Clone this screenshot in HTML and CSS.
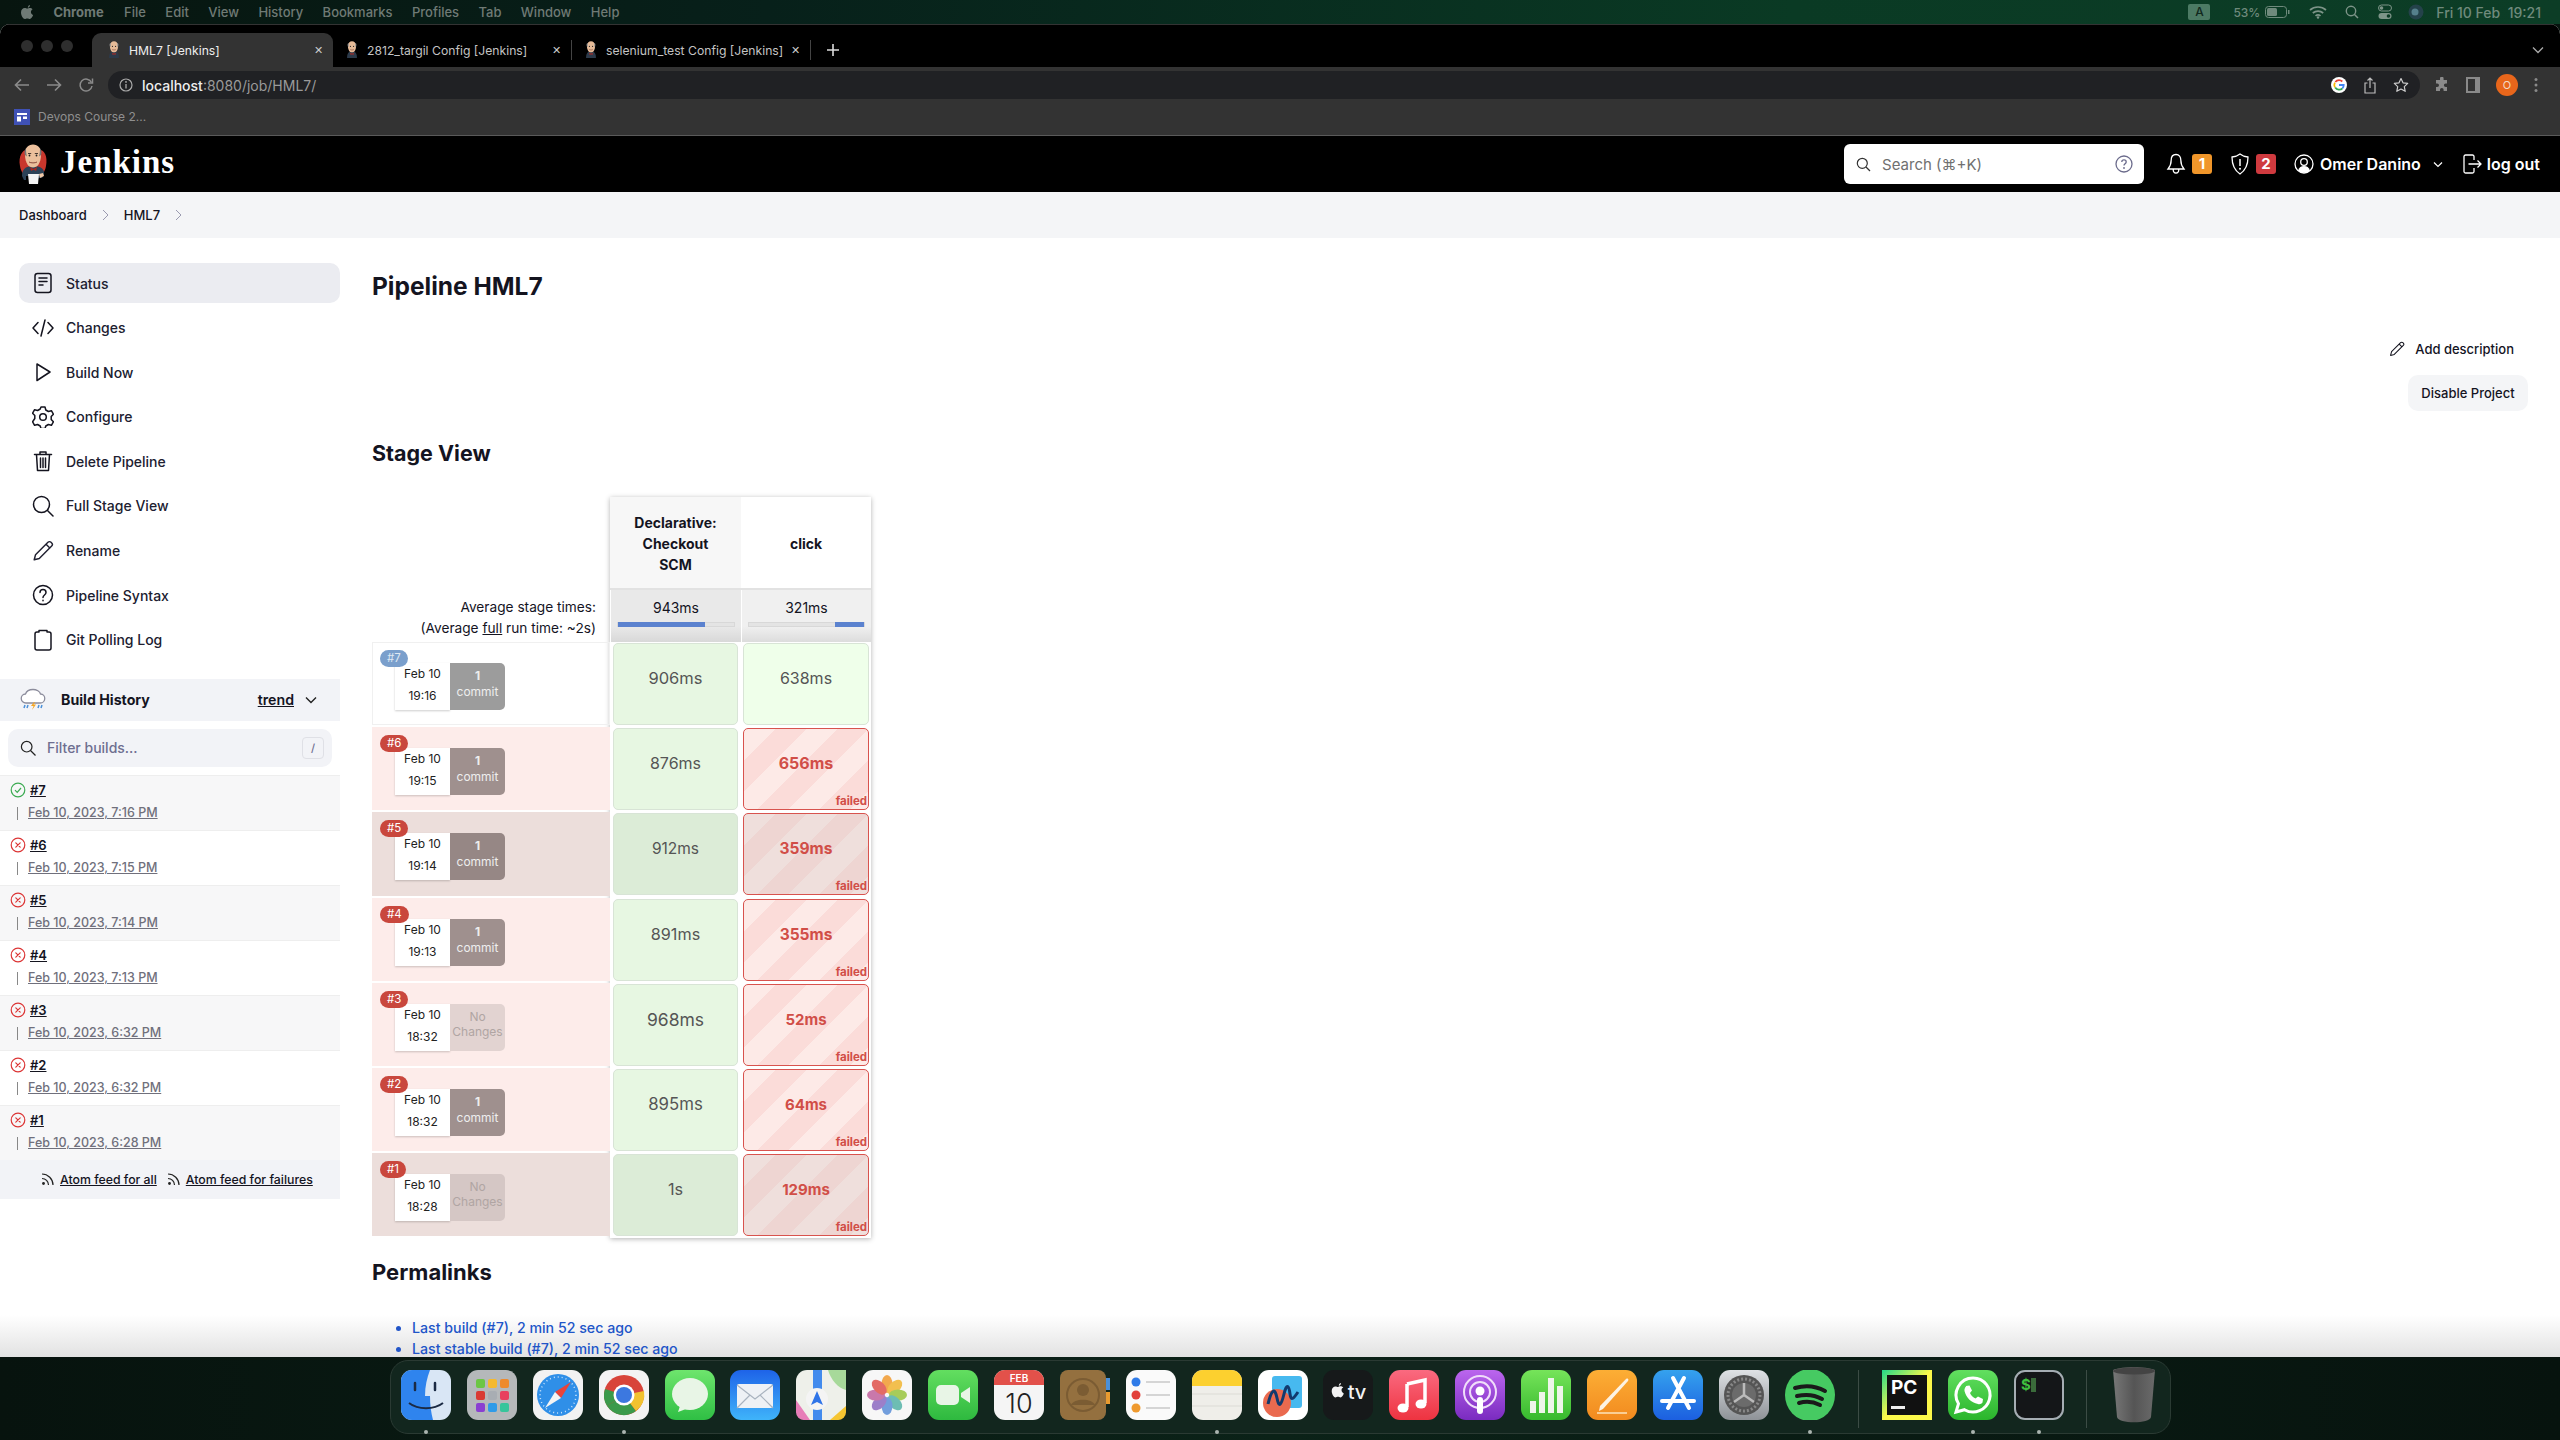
FILE: index.html
```html
<!doctype html>
<html lang="en">
<head>
    <meta charset="utf-8"/>
    <title>HML7 [Jenkins]</title>
    <link rel="stylesheet" href="styles.css">
</head>

<body>
<svg class="defs" width="0" height="0">
    <symbol id="butler" viewBox="0 0 30 40">
        <path d="M2 22C0 12 5 6 8 6h14c4 0 8 6 6 16-1 6-4 10-8 10H9c-3 0-6-4-7-10z" fill="#c8372d"/>
        <path d="M4 32c0-6 3-10 11-10s12 3 11 9l-2 3H17v-2H8v4H6z" fill="#2c4257"/>
        <path d="M10 30h11l-1 10h-9z" fill="#f4f4f4"/>
        <path d="M21 30l4-1 1 3-4 2z" fill="#f0c7a5"/>
        <path d="M12 23l3.500 2 3.500-2-.8 4-2.700-1.300L13 27z" fill="#a8261f"/>
        <path d="M7 10C7 4 10 .5 15 .5S23 4 23 10c0 5-1 8-2.500 10.500-1.400 2.300-3.500 3-5.500 3s-4.100-.7-5.500-3C8 18 7 15 7 10z" fill="#ecc09c"/>
        <path d="M7 11c-1-2-.5-5 1-6.500 0 3 .3 5 1 8zM23 11c1-2 .5-5-1-6.500 0 3-.3 5-1 8z" fill="#777"/>
        <path d="M10 9.500h3.200M16.800 9.500H20" stroke="#4a3a30" stroke-width="1"/>
        <circle cx="11.500" cy="11.500" r=".9" fill="#222"/>
        <circle cx="18.500" cy="11.500" r=".9" fill="#222"/>
        <path d="M11 18c2 1.200 6 1.200 8 0" stroke="#8a4a3a" stroke-width="1" fill="none"/>
    </symbol>
    <symbol id="butler-small" viewBox="0 0 30 40">
        <path d="M4 38c0-10 3-15 11-15s11 5 11 15z" fill="#2c3a4a"/>
        <path d="M11 26l4 2.500 4-2.500-.8 5-3.200-1.500L12 31z" fill="#b32a22"/>
        <path d="M6 11C6 4 10 .5 15 .5S24 4 24 11c0 5-1 8-2.500 10.500-1.400 2.300-4 3.500-6.500 3.500s-5.100-1.200-6.500-3.500C7 19 6 16 6 11z" fill="#e6bb98"/>
        <path d="M6 12c-1.500-3-1-6 1.500-8 0 3 .3 6 1 9zM24 12c1.500-3 1-6-1.500-8 0 3-.3 6-1 9z" fill="#9a9a9a"/>
        <circle cx="11.500" cy="12" r="1.200" fill="#222"/>
        <circle cx="18.500" cy="12" r="1.200" fill="#222"/>
        <path d="M11 19c2 1.200 6 1.200 8 0" stroke="#7a4030" stroke-width="1.200" fill="none"/>
    </symbol>
    <symbol id="failed" viewBox="0 0 16 16">
        <circle cx="8" cy="8" r="6.800" fill="none" stroke="#dc3535" stroke-width="1.200"/>
        <path d="M5.800 5.800l4.400 4.400M10.200 5.800l-4.400 4.400" stroke="#dc3535" stroke-width="1.200" stroke-linecap="round"/>
    </symbol>
    <symbol id="rss" viewBox="0 0 14 14">
        <circle cx="2.500" cy="11.500" r="1.400" fill="#222"/>
        <path d="M1 6.500c3.600 0 6.500 2.900 6.500 6.500M1 2c6 0 11 5 11 11" fill="none" stroke="#222" stroke-width="1.200"/>
    </symbol>
    <symbol id="pencil" viewBox="0 0 20 20">
        <path d="M2 18l1.200-4.600L14.500 2.100c.8-.8 2-.8 2.800 0l.6.600c.8.800.8 2 0 2.800L6.600 16.800zM12.800 3.800l3.400 3.400" fill="none" stroke="currentColor" stroke-width="1.300" stroke-linejoin="round"/>
    </symbol>
</svg>

<div class="menubar">
    <div class="menu-left">
        <svg class="apple" width="14" height="16" viewBox="0 0 14 16"><path d="M10 1c-1 .2-2.200 1.200-2.200 2.800 1.200 0 2.200-1.300 2.200-2.800zM7.300 4.600C6.500 4.600 5.800 4 4.700 4 2.800 4 1 5.600 1 8.500 1 11.500 3.200 15 4.800 15c.9 0 1.300-.6 2.500-.6s1.500.6 2.500.6c1.400 0 2.900-2.400 3.300-3.900-1.400-.6-2.200-1.800-2.200-3.100 0-1.200.7-2.200 1.700-2.800C11.900 4.300 10.800 4 10 4c-1.200 0-2 .6-2.700.6z" fill="#6f7a75"/></svg>
        <b>Chrome</b><span>File</span><span>Edit</span><span>View</span><span>History</span><span>Bookmarks</span><span>Profiles</span><span>Tab</span><span>Window</span><span>Help</span>
    </div>
    <div class="menu-right">
        <i class="input-a">A</i>
        <span class="pct">53%</span>
        <svg width="25" height="12" viewBox="0 0 25 12"><rect x=".5" y=".5" width="21" height="11" rx="3" fill="none" stroke="#6f8a7c"/><rect x="2" y="2" width="10" height="8" rx="1.500" fill="#6f8a7c"/><rect x="23" y="4" width="1.500" height="4" fill="#6f8a7c"/></svg>
        <svg class="mi-wifi" width="18" height="14" viewBox="0 0 18 14"><path d="M1 5c4.500-4 11.500-4 16 0M3.800 8c3-2.600 7.400-2.600 10.400 0M6.500 10.800c1.500-1.200 3.500-1.200 5 0" fill="none" stroke="#7d9488" stroke-width="1.700"/><circle cx="9" cy="12.500" r="1.200" fill="#7d9488"/></svg>
        <svg class="mi-search" width="14" height="14" viewBox="0 0 14 14"><circle cx="6" cy="6" r="4.700" fill="none" stroke="#7d9488" stroke-width="1.400"/><path d="M9.500 9.500l3.500 3.500" stroke="#7d9488" stroke-width="1.500"/></svg>
        <svg class="mi-ctrl" width="14" height="16" viewBox="0 0 14 16"><rect x=".5" y="1" width="13" height="6" rx="3" fill="none" stroke="#7d9488"/><rect x=".5" y="9" width="13" height="6" rx="3" fill="#7d9488"/><circle cx="3.500" cy="4" r="1.800" fill="#7d9488"/><circle cx="10.500" cy="12" r="1.800" fill="#0b3a24"/></svg>
        <svg class="mi-siri" width="16" height="16" viewBox="0 0 16 16"><circle cx="8" cy="8" r="7.500" fill="#24424a"/><circle cx="7" cy="8" r="3.500" fill="#55808c"/></svg>
        <span class="clock">Fri 10 Feb&nbsp; 19:21</span>
    </div>
</div>

<div class="window">
    <div class="tabstrip">
        <div class="lights"><i></i><i></i><i></i></div>
        <div class="tab tab-active">
            <svg class="favicon" width="14" height="18"><use href="#butler-small"/></svg>
            <span class="tab-title">HML7 [Jenkins]</span>
            <span class="tab-x">✕</span>
        </div>
        <div class="tab tab-second">
            <svg class="favicon" width="14" height="18"><use href="#butler-small"/></svg>
            <span class="tab-title">2812_targil Config [Jenkins]</span>
            <span class="tab-x">✕</span>
        </div>
        <div class="tab tab-third">
            <svg class="favicon" width="14" height="18"><use href="#butler-small"/></svg>
            <span class="tab-title">selenium_test Config [Jenkins]</span>
            <span class="tab-x">✕</span>
        </div>
        <svg class="tab-plus" width="14" height="14" viewBox="0 0 14 14"><path d="M7 1v12M1 7h12" stroke="#ddd" stroke-width="1.600"/></svg>
        <svg class="tab-more" width="12" height="8" viewBox="0 0 12 8"><path d="M1 1.500l5 5 5-5" fill="none" stroke="#aaa" stroke-width="1.300"/></svg>
    </div>

    <div class="toolbar">
        <div class="nav-icons">
            <svg width="16" height="14" viewBox="0 0 16 14"><path d="M15 7H2M7 1.500L1.500 7 7 12.500" fill="none" stroke="#8b8b8b" stroke-width="1.600"/></svg>
            <svg width="16" height="14" viewBox="0 0 16 14"><path d="M1 7h13M9 1.500L14.500 7 9 12.500" fill="none" stroke="#8b8b8b" stroke-width="1.600"/></svg>
            <svg width="16" height="16" viewBox="0 0 16 16"><path d="M13.500 5.500A6 6 0 1 0 14 9" fill="none" stroke="#8b8b8b" stroke-width="1.500"/><path d="M14.500 1.500v4.500H10" fill="none" stroke="#8b8b8b" stroke-width="1.500"/></svg>
        </div>
        <div class="omnibox">
            <svg width="14" height="14" viewBox="0 0 14 14"><circle cx="7" cy="7" r="6" fill="none" stroke="#aaa" stroke-width="1.200"/><path d="M7 6v4.500" stroke="#aaa" stroke-width="1.300"/><circle cx="7" cy="3.900" r=".9" fill="#aaa"/></svg>
            <span class="url"><b>localhost</b>:8080/job/HML7/</span>
            <div class="omni-right">
                <svg width="16" height="16" viewBox="0 0 16 16"><circle cx="8" cy="8" r="8" fill="#fff"/><path d="M8 3.200a4.800 4.800 0 0 1 3.300 1.300" fill="none" stroke="#ea4335" stroke-width="1.800"/><path d="M4.300 5a4.800 4.800 0 0 1 3.700-1.800" fill="none" stroke="#ea4335" stroke-width="1.800"/><path d="M3.900 10.400a4.800 4.800 0 0 1 0-4.800" fill="none" stroke="#fbbc05" stroke-width="1.800"/><path d="M11.500 11.300a4.800 4.800 0 0 1-7.300-.8" fill="none" stroke="#34a853" stroke-width="1.800"/><path d="M8 8h4.700c0 1.300-.5 2.500-1.300 3.300" fill="none" stroke="#4285f4" stroke-width="1.800"/></svg>
                <svg width="12" height="17" viewBox="0 0 12 17"><path d="M3.500 6H1v10h10V6H8.500M6 11V1M3.500 3.500L6 1l2.500 2.500" fill="none" stroke="#bbb" stroke-width="1.200"/></svg>
                <svg width="16" height="16" viewBox="0 0 16 16"><path d="M8 1.500l2 4.300 4.700.6-3.400 3.200.9 4.700L8 12l-4.200 2.300.9-4.700L1.300 6.400 6 5.800z" fill="none" stroke="#ccc" stroke-width="1.200" stroke-linejoin="round"/></svg>
            </div>
        </div>
        <div class="tool-right">
            <svg width="16" height="16" viewBox="0 0 16 16"><path d="M6 1.500a1.800 1.800 0 0 1 3.600 0V3h3.400v3.500h-1.300a1.800 1.800 0 0 0 0 3.600H13V14H9.600v-1.300a1.800 1.800 0 0 0-3.600 0V14H2v-3.900h1.200a1.800 1.800 0 0 0 0-3.600H2V3h4z" fill="#8a8a8a"/></svg>
            <svg width="14" height="16" viewBox="0 0 14 16"><rect x="1" y="1" width="12" height="14" fill="none" stroke="#8a8a8a" stroke-width="2"/><rect x="9" y="1" width="4" height="14" fill="#8a8a8a"/></svg>
            <span class="avatar">O</span>
            <svg width="4" height="16" viewBox="0 0 4 16"><circle cx="2" cy="2.500" r="1.500" fill="#8a8a8a"/><circle cx="2" cy="8" r="1.500" fill="#8a8a8a"/><circle cx="2" cy="13.500" r="1.500" fill="#8a8a8a"/></svg>
        </div>
    </div>

    <div class="bookmarks">
        <svg width="16" height="16" viewBox="0 0 16 16"><rect width="16" height="16" fill="#3f51b5"/><rect x="3" y="4" width="10" height="2" fill="#fff"/><rect x="3" y="7.500" width="4" height="5" fill="#fff"/><rect x="9" y="7.500" width="4" height="2.500" fill="#fff"/></svg>
        <span>Devops Course 2...</span>
    </div>

    <header class="jk-header">
        <div class="jk-logo">
            <svg width="30" height="40"><use href="#butler"/></svg>
            <span>Jenkins</span>
        </div>
        <div class="jk-tools">
            <div class="searchbox">
                <svg width="15" height="15" viewBox="0 0 15 15"><circle cx="6.300" cy="6.300" r="5" fill="none" stroke="#333" stroke-width="1.200"/><path d="M10 10l4 4" stroke="#333" stroke-width="1.200"/></svg>
                <span class="search-hint">Search (⌘+K)</span>
                <svg class="search-help" width="18" height="18" viewBox="0 0 18 18"><circle cx="9" cy="9" r="8" fill="none" stroke="#6c6c8c" stroke-width="1.300"/><path d="M6.800 7c0-1.300 1-2.100 2.200-2.100S11.200 5.700 11.200 7c0 1.800-2.200 1.800-2.200 3.600" fill="none" stroke="#6c6c8c" stroke-width="1.300"/><circle cx="9" cy="13" r=".9" fill="#6c6c8c"/></svg>
            </div>
            <div class="jk-bell">
                <svg width="20" height="22" viewBox="0 0 20 22"><path d="M10 1.500c-3.200 0-4.800 2.500-4.800 5.500 0 4.500-1.200 6.500-3.200 9h16c-2-2.500-3.200-4.500-3.200-9 0-3-1.600-5.500-4.800-5.500zM7.200 16.500c0 2.200 1.200 3.500 2.800 3.500s2.800-1.300 2.800-3.500" fill="none" stroke="#fff" stroke-width="1.300"/></svg>
                <span class="count count-orange">1</span>
            </div>
            <div class="jk-shield">
                <svg width="20" height="22" viewBox="0 0 20 22"><path d="M10 1c2.500 2 5 2.700 8 3 0 8-2 13-8 17C4 17 2 12 2 4c3-.3 5.500-1 8-3z" fill="none" stroke="#fff" stroke-width="1.300"/><path d="M10 6v7" stroke="#fff" stroke-width="1.500"/><circle cx="10" cy="15.800" r="1" fill="#fff"/></svg>
                <span class="count count-red">2</span>
            </div>
            <div class="jk-user">
                <svg width="20" height="20" viewBox="0 0 20 20"><circle cx="10" cy="10" r="9" fill="none" stroke="#fff" stroke-width="1.300"/><circle cx="10" cy="8" r="3.300" fill="none" stroke="#fff" stroke-width="1.300"/><path d="M4 16.500c1-3.300 3.200-4.500 6-4.500s5 1.200 6 4.500c-3 3-9 3-12 0z" fill="#fff"/></svg>
                <span>Omer Danino</span>
                <svg class="user-caret" width="10" height="7" viewBox="0 0 10 7"><path d="M1 1.500l4 4 4-4" fill="none" stroke="#fff" stroke-width="1.200"/></svg>
            </div>
            <div class="jk-logout">
                <svg width="20" height="22" viewBox="0 0 20 22"><path d="M12 7V3.500C12 2.700 11.300 2 10.500 2H3.500C2.700 2 2 2.700 2 3.500v15c0 .8.700 1.500 1.500 1.500h7c.8 0 1.500-.7 1.500-1.500V15M6.500 11H19M15.500 7.500L19 11l-3.500 3.500" fill="none" stroke="#fff" stroke-width="1.300"/></svg>
                <span>log out</span>
            </div>
        </div>
    </header>

    <div class="crumbs">
        <span>Dashboard</span>
        <svg width="7" height="12" viewBox="0 0 7 12"><path d="M1 1l5 5-5 5" fill="none" stroke="#9a9ab0" stroke-width="1"/></svg>
        <span>HML7</span>
        <svg width="7" height="12" viewBox="0 0 7 12"><path d="M1 1l5 5-5 5" fill="none" stroke="#9a9ab0" stroke-width="1"/></svg>
    </div>

    <div class="page">
        <div class="fade"></div>
        <aside class="side">
            <nav class="side-nav">
                <a class="side-item current">
                    <svg viewBox="0 0 20 22"><rect x="2" y="1.500" width="16" height="19" rx="2.500"/><path d="M6 6h8M6 9.500h8M6 13h4"/></svg>
                    Status
                </a>
                <a class="side-item">
                    <svg viewBox="0 0 22 20"><path d="M6 4.500L1 10l5 5.500M16 4.500l5 5.500-5 5.500M13 2L9 18"/></svg>
                    Changes
                </a>
                <a class="side-item">
                    <svg viewBox="0 0 20 22"><path d="M4 3l13 8-13 8.500z"/></svg>
                    Build Now
                </a>
                <a class="side-item">
                    <svg viewBox="0 0 22 22"><path d="M9 1.500h4l.8 3 2.600 1.500 3-.8 2 3.500-2.200 2.300v3l2.200 2.300-2 3.500-3-.8-2.600 1.500-.8 2.500H9l-.8-2.500-2.600-1.500-3 .8-2-3.500L2.800 13v-3L.6 7.700l2-3.500 3 .8 2.600-1.500z" transform="translate(0 -.5)"/><circle cx="11" cy="11" r="3.300"/></svg>
                    Configure
                </a>
                <a class="side-item">
                    <svg viewBox="0 0 20 22"><path d="M1.500 4.500h17M7 4.500V2h6v2.500M3.500 4.500L4.500 20.500h11l1-16M7.500 8v9.500M10 8v9.500M12.500 8v9.500"/></svg>
                    Delete Pipeline
                </a>
                <a class="side-item">
                    <svg viewBox="0 0 22 22"><circle cx="9.500" cy="9.500" r="8"/><path d="M15.500 15.500L21 21"/></svg>
                    Full Stage View
                </a>
                <a class="side-item">
                    <svg viewBox="0 0 20 20"><use href="#pencil"/></svg>
                    Rename
                </a>
                <a class="side-item">
                    <svg viewBox="0 0 22 22"><circle cx="11" cy="11" r="9.500"/><path d="M8 8.500c0-1.800 1.300-3 3-3s3 1.200 3 3c0 2.500-3 2.500-3 5"/><path class="dot" d="M11 16.200v.6"/></svg>
                    Pipeline Syntax
                </a>
                <a class="side-item">
                    <svg viewBox="0 0 20 22"><path d="M6 3H4a2 2 0 0 0-2 2v14a2 2 0 0 0 2 2h12a2 2 0 0 0 2-2V5a2 2 0 0 0-2-2h-2M6 3V1.500h8V3"/></svg>
                    Git Polling Log
                </a>
            </nav>

            <section class="history">
                <div class="history-head">
                    <svg width="26" height="24" viewBox="0 0 26 24"><path d="M6 15a4.500 4.500 0 0 1-.5-9C6.500 3 9.500 1.500 13 1.500S20 3.500 20.500 6a4.500 4.500 0 0 1-.5 9z" fill="#fff" stroke="#8c8c9c" stroke-width="1.300"/><path d="M14 14l-3 4h2.500l-1.500 4 4-5.500h-2.500l1.500-2.500z" fill="#f5a623"/><path d="M5 17l-1 3M8 17l-1 3M19 17l-1 3M22 17l-1 3" stroke="#4a90d9" stroke-width="1.500"/></svg>
                    <b>Build History</b>
                    <a class="trend">trend</a>
                    <svg width="12" height="8" viewBox="0 0 12 8"><path d="M1 1.500l5 5 5-5" fill="none" stroke="#222" stroke-width="1.400"/></svg>
                </div>
                <div class="filter">
                    <svg width="16" height="16" viewBox="0 0 16 16"><circle cx="6.700" cy="6.700" r="5.300" fill="none" stroke="#222" stroke-width="1.200"/><path d="M10.500 10.500l5 5" stroke="#222" stroke-width="1.200"/></svg>
                    <span>Filter builds...</span>
                    <kbd>/</kbd>
                </div>
                <div class="build odd">
                    <div class="build-top">
                        <svg width="16" height="16" viewBox="0 0 16 16"><circle cx="8" cy="8" r="6.800" fill="none" stroke="#3cab52" stroke-width="1.200"/><path d="M5 8.200l2.200 2.200L11 6" fill="none" stroke="#3cab52" stroke-width="1.200"/></svg>
                        <a>#7</a>
                    </div>
                    <div class="build-date"><i></i><a>Feb 10, 2023, 7:16 PM</a></div>
                </div>
                <div class="build">
                    <div class="build-top"><svg width="16" height="16"><use href="#failed"/></svg><a>#6</a></div>
                    <div class="build-date"><i></i><a>Feb 10, 2023, 7:15 PM</a></div>
                </div>
                <div class="build odd">
                    <div class="build-top"><svg width="16" height="16"><use href="#failed"/></svg><a>#5</a></div>
                    <div class="build-date"><i></i><a>Feb 10, 2023, 7:14 PM</a></div>
                </div>
                <div class="build">
                    <div class="build-top"><svg width="16" height="16"><use href="#failed"/></svg><a>#4</a></div>
                    <div class="build-date"><i></i><a>Feb 10, 2023, 7:13 PM</a></div>
                </div>
                <div class="build odd">
                    <div class="build-top"><svg width="16" height="16"><use href="#failed"/></svg><a>#3</a></div>
                    <div class="build-date"><i></i><a>Feb 10, 2023, 6:32 PM</a></div>
                </div>
                <div class="build">
                    <div class="build-top"><svg width="16" height="16"><use href="#failed"/></svg><a>#2</a></div>
                    <div class="build-date"><i></i><a>Feb 10, 2023, 6:32 PM</a></div>
                </div>
                <div class="build odd">
                    <div class="build-top"><svg width="16" height="16"><use href="#failed"/></svg><a>#1</a></div>
                    <div class="build-date"><i></i><a>Feb 10, 2023, 6:28 PM</a></div>
                </div>
                <div class="history-foot">
                    <svg width="14" height="14"><use href="#rss"/></svg><a>Atom feed for all</a>
                    <svg class="rss-two" width="14" height="14"><use href="#rss"/></svg><a>Atom feed for failures</a>
                </div>
            </section>
        </aside>

        <main class="main">
            <div class="title-row">
                <h1>Pipeline HML7</h1>
            </div>
            <div class="actions">
                <a class="add-desc"><svg width="16" height="16"><use href="#pencil"/></svg>Add description</a>
                <button class="disable-btn">Disable Project</button>
            </div>
            <h2 class="stage-title">Stage View</h2>

            <div class="stage">
                <div class="stage-left">
                    <div class="avg-label">
                        <div>Average stage times:</div>
                        <div>(Average <u>full</u> run time: ~2s)</div>
                    </div>
                    <div class="run">
                        <span class="run-no no-ok">#7</span>
                        <div class="run-date"><div>Feb 10</div><div>19:16</div></div>
                        <div class="run-commit">1<br><small>commit</small></div>
                    </div>
                    <div class="run bad">
                        <span class="run-no">#6</span>
                        <div class="run-date"><div>Feb 10</div><div>19:15</div></div>
                        <div class="run-commit">1<br><small>commit</small></div>
                    </div>
                    <div class="run bad dim">
                        <span class="run-no">#5</span>
                        <div class="run-date"><div>Feb 10</div><div>19:14</div></div>
                        <div class="run-commit">1<br><small>commit</small></div>
                    </div>
                    <div class="run bad">
                        <span class="run-no">#4</span>
                        <div class="run-date"><div>Feb 10</div><div>19:13</div></div>
                        <div class="run-commit">1<br><small>commit</small></div>
                    </div>
                    <div class="run bad">
                        <span class="run-no">#3</span>
                        <div class="run-date"><div>Feb 10</div><div>18:32</div></div>
                        <div class="run-commit none"><small>No<br>Changes</small></div>
                    </div>
                    <div class="run bad">
                        <span class="run-no">#2</span>
                        <div class="run-date"><div>Feb 10</div><div>18:32</div></div>
                        <div class="run-commit">1<br><small>commit</small></div>
                    </div>
                    <div class="run bad dim">
                        <span class="run-no">#1</span>
                        <div class="run-date"><div>Feb 10</div><div>18:28</div></div>
                        <div class="run-commit none"><small>No<br>Changes</small></div>
                    </div>
                </div>

                <div class="stage-cols">
                    <div class="col-head alt">Declarative:<br>Checkout<br>SCM</div>
                    <div class="col-head">click</div>
                    <div class="col-avg">943ms<div class="bar"><div class="bar-fill bar-a"></div></div></div>
                    <div class="col-avg">321ms<div class="bar"><div class="bar-fill bar-b"></div></div></div>

                    <div class="cell-wrap"><div class="cell ok t52">906ms</div></div>
                    <div class="cell-wrap"><div class="cell ok pale t50">638ms</div></div>
                    <div class="cell-wrap"><div class="cell ok t50">876ms</div></div>
                    <div class="cell-wrap"><div class="cell fail t54">656ms<span class="failed">failed</span></div></div>
                    <div class="cell-wrap"><div class="cell ok dim t49">912ms</div></div>
                    <div class="cell-wrap"><div class="cell fail dim t52">359ms<span class="failed">failed</span></div></div>
                    <div class="cell-wrap"><div class="cell ok t51">891ms</div></div>
                    <div class="cell-wrap"><div class="cell fail t52">355ms<span class="failed">failed</span></div></div>
                    <div class="cell-wrap"><div class="cell ok t55">968ms</div></div>
                    <div class="cell-wrap"><div class="cell fail t50">52ms<span class="failed">failed</span></div></div>
                    <div class="cell-wrap"><div class="cell ok t53">895ms</div></div>
                    <div class="cell-wrap"><div class="cell fail t50">64ms<span class="failed">failed</span></div></div>
                    <div class="cell-wrap"><div class="cell ok dim t51">1s</div></div>
                    <div class="cell-wrap"><div class="cell fail dim t50">129ms<span class="failed">failed</span></div></div>
                </div>
            </div>

            <h2 class="perma-title">Permalinks</h2>
            <ul class="perma">
                <li><a>Last build (#7), 2 min 52 sec ago</a></li>
                <li><a>Last stable build (#7), 2 min 52 sec ago</a></li>
            </ul>
        </main>
    </div>
</div>

<div class="dock-band">
    <div class="dock">
        <div class="dock-item run-dot"><svg viewBox="0 0 50 50"><rect width="50" height="50" rx="11" fill="#d9e6f5"/><path d="M11 0h18c-3 8-5 16-5 26h5c0 9 1 16 3 24H11A11 11 0 0 1 0 39V11A11 11 0 0 1 11 0z" fill="#2f84ee"/><path d="M14 13v7M34 13v7" stroke="#1b2a44" stroke-width="2.500" stroke-linecap="round"/><path d="M8 33c9 7 25 7 34 0" fill="none" stroke="#1b2a44" stroke-width="2"/></svg></div>
        <div class="dock-item"><svg viewBox="0 0 50 50"><rect width="50" height="50" rx="11" fill="#b5b8ba"/><rect x="9" y="9" width="9" height="9" rx="2" fill="#6cc644"/><rect x="21" y="9" width="9" height="9" rx="2" fill="#f5b92e"/><rect x="33" y="9" width="9" height="9" rx="2" fill="#ee8a2c"/><rect x="9" y="21" width="9" height="9" rx="2" fill="#d93a32"/><rect x="21" y="21" width="9" height="9" rx="2" fill="#a8adb3"/><rect x="33" y="21" width="9" height="9" rx="2" fill="#e8405e"/><rect x="9" y="33" width="9" height="9" rx="2" fill="#8a3fd1"/><rect x="21" y="33" width="9" height="9" rx="2" fill="#2f9be8"/><rect x="33" y="33" width="9" height="9" rx="2" fill="#37c59b"/></svg></div>
        <div class="dock-item"><svg viewBox="0 0 50 50"><rect width="50" height="50" rx="11" fill="#f2f2f2"/><circle cx="25" cy="25" r="21" fill="#2f8fe8"/><circle cx="25" cy="25" r="18" fill="none" stroke="#cfe6fb" stroke-width="1.500" stroke-dasharray="1 3"/><path d="M38 12L22 22l6 6z" fill="#e8433a"/><path d="M12 38l10-16 6 6z" fill="#f4f4f4"/></svg></div>
        <div class="dock-item run-dot"><svg viewBox="0 0 50 50"><rect width="50" height="50" rx="11" fill="#f3f3f3"/><circle cx="25" cy="25" r="20" fill="#d8443a"/><path d="M25 25L8 36a20 20 0 0 1-2-17z" fill="#3b9a4b"/><path d="M8 36a20 20 0 0 0 29 5L25 25z" fill="#3b9a4b"/><path d="M25 25l20-4a20 20 0 0 1-8 20z" fill="#f2c22f"/><circle cx="25" cy="25" r="10.500" fill="#fff"/><circle cx="25" cy="25" r="8" fill="#3c78e0"/></svg></div>
        <div class="dock-item"><svg viewBox="0 0 50 50"><defs><linearGradient id="gMsg" x1="0" y1="0" x2="0" y2="1"><stop offset="0" stop-color="#6ee56d"/><stop offset="1" stop-color="#2fbf44"/></linearGradient></defs><rect width="50" height="50" rx="11" fill="url(#gMsg)"/><ellipse cx="25" cy="24" rx="18" ry="16" fill="#e8f5e6"/><path d="M15 36l-2 6 8-3z" fill="#e8f5e6"/></svg></div>
        <div class="dock-item"><svg viewBox="0 0 50 50"><defs><linearGradient id="gMail" x1="0" y1="0" x2="0" y2="1"><stop offset="0" stop-color="#1e63e8"/><stop offset="1" stop-color="#3fb4fa"/></linearGradient></defs><rect width="50" height="50" rx="11" fill="url(#gMail)"/><rect x="7" y="14" width="36" height="24" rx="2" fill="#eef1f5"/><path d="M7 15l18 14 18-14M7 38l13-13M43 38L30 25" fill="none" stroke="#a9b3bf" stroke-width="1.200"/></svg></div>
        <div class="dock-item"><svg viewBox="0 0 50 50"><rect width="50" height="50" rx="11" fill="#eef0ea"/><path d="M32 0h18v20c-8-2-15-10-18-20z" fill="#a7d99a"/><path d="M0 30l14 20H8a8 8 0 0 1-8-8z" fill="#e77db8"/><path d="M34 50l16-14v6a8 8 0 0 1-8 8z" fill="#f5c531"/><path d="M17 0h9v50h-9z" fill="#2f80ed" opacity=".9"/><circle cx="21" cy="29" r="11" fill="#f4f4f4"/><path d="M21 21l6 14-6-3-6 3z" fill="#2f74e8"/></svg></div>
        <div class="dock-item"><svg viewBox="0 0 50 50"><rect width="50" height="50" rx="11" fill="#f7f7f7"/><g opacity=".85"><ellipse cx="25" cy="14" rx="5.500" ry="9" fill="#f29b30"/><ellipse cx="25" cy="14" rx="5.500" ry="9" fill="#f2b632" transform="rotate(45 25 25)"/><ellipse cx="25" cy="14" rx="5.500" ry="9" fill="#9ac53f" transform="rotate(90 25 25)"/><ellipse cx="25" cy="14" rx="5.500" ry="9" fill="#55b3a8" transform="rotate(135 25 25)"/><ellipse cx="25" cy="14" rx="5.500" ry="9" fill="#5b8fd8" transform="rotate(180 25 25)"/><ellipse cx="25" cy="14" rx="5.500" ry="9" fill="#8d6bc1" transform="rotate(225 25 25)"/><ellipse cx="25" cy="14" rx="5.500" ry="9" fill="#c2629e" transform="rotate(270 25 25)"/><ellipse cx="25" cy="14" rx="5.500" ry="9" fill="#e0534c" transform="rotate(315 25 25)"/></g></svg></div>
        <div class="dock-item"><svg viewBox="0 0 50 50"><defs><linearGradient id="gFace" x1="0" y1="0" x2="0" y2="1"><stop offset="0" stop-color="#63de60"/><stop offset="1" stop-color="#2eb93f"/></linearGradient></defs><rect width="50" height="50" rx="11" fill="url(#gFace)"/><rect x="8" y="15" width="23" height="20" rx="5" fill="#e8f5e6"/><path d="M33 23l9-6v16l-9-6z" fill="#e8f5e6"/></svg></div>
        <div class="dock-item"><svg viewBox="0 0 50 50"><rect width="50" height="50" rx="11" fill="#f5f5f5"/><path d="M0 15V11A11 11 0 0 1 11 0h28a11 11 0 0 1 11 11v4z" fill="#e2514a"/><text x="25" y="11.500" class="dock-feb">FEB</text><text x="25" y="43" class="dock-ten">10</text></svg></div>
        <div class="dock-item"><svg viewBox="0 0 50 50"><rect width="46" height="50" rx="8" fill="#94703f"/><rect x="46" y="8" width="4" height="12" fill="#4a90d9"/><rect x="46" y="22" width="4" height="12" fill="#e89b30"/><circle cx="23" cy="25" r="16" fill="none" stroke="#7b5c33" stroke-width="2"/><circle cx="23" cy="20" r="6" fill="#7b5c33"/><path d="M11 35c3-7 21-7 24 0" fill="#7b5c33"/></svg></div>
        <div class="dock-item"><svg viewBox="0 0 50 50"><rect width="50" height="50" rx="11" fill="#fafafa"/><circle cx="10" cy="12" r="4.500" fill="#2f7be8"/><circle cx="10" cy="25" r="4.500" fill="#e2403a"/><circle cx="10" cy="38" r="4.500" fill="#ef9a2f"/><path d="M20 12h24M20 25h24M20 38h24" stroke="#d5d5d5" stroke-width="2"/></svg></div>
        <div class="dock-item run-dot"><svg viewBox="0 0 50 50"><rect width="50" height="50" rx="11" fill="#efeee9"/><path d="M0 16V11A11 11 0 0 1 11 0h28a11 11 0 0 1 11 11v5z" fill="#fcd02f"/><path d="M0 24h50M0 36h50" stroke="#dcdbd5" stroke-width="1"/></svg></div>
        <div class="dock-item"><svg viewBox="0 0 50 50"><rect width="50" height="50" rx="11" fill="#fff"/><rect x="14" y="6" width="30" height="32" rx="3" fill="#47b9ef"/><circle cx="19" cy="33" r="14" fill="#ea6a4f"/><path d="M10 34c4-16 7-16 9-6s4 8 7-4 5-8 6 0 4 4 8-2" fill="none" stroke="#123a6e" stroke-width="3"/></svg></div>
        <div class="dock-item"><svg viewBox="0 0 50 50"><rect width="50" height="50" rx="11" fill="#16191a"/><path d="M18 13c-1 .2-2.200 1.200-2.200 2.800 1.200 0 2.200-1.300 2.200-2.800zM15 17c-.8 0-1.500-.6-2.600-.6-1.900 0-3.700 1.600-3.700 4.500 0 3 2.200 6.500 3.800 6.500.9 0 1.300-.6 2.500-.6s1.500.6 2.500.6c1.400 0 2.900-2.400 3.300-3.900-2.800-1.200-3-5.200-.5-5.900-.8-1-1.900-1.300-2.700-1.300-1.200 0-2 .7-2.600.7z" fill="#f2f2f2"/><text x="34" y="29" class="dock-tv">tv</text></svg></div>
        <div class="dock-item"><svg viewBox="0 0 50 50"><defs><linearGradient id="gMusic" x1="0" y1="0" x2="0" y2="1"><stop offset="0" stop-color="#fa6a80"/><stop offset="1" stop-color="#ee3340"/></linearGradient></defs><rect width="50" height="50" rx="11" fill="url(#gMusic)"/><path d="M18 14l18-4v23" fill="none" stroke="#fff" stroke-width="3.500"/><path d="M18 14v23" stroke="#fff" stroke-width="3.500"/><ellipse cx="14" cy="38" rx="5.500" ry="4.500" fill="#fff"/><ellipse cx="32" cy="34" rx="5.500" ry="4.500" fill="#fff"/></svg></div>
        <div class="dock-item"><svg viewBox="0 0 50 50"><defs><linearGradient id="gPod" x1="0" y1="0" x2="0" y2="1"><stop offset="0" stop-color="#bb66ee"/><stop offset="1" stop-color="#7a2bc0"/></linearGradient></defs><rect width="50" height="50" rx="11" fill="url(#gPod)"/><circle cx="25" cy="22" r="16" fill="none" stroke="#f0ddfa" stroke-width="2"/><circle cx="25" cy="22" r="10" fill="none" stroke="#f0ddfa" stroke-width="2"/><circle cx="25" cy="21" r="4.500" fill="#fff"/><rect x="22" y="27" width="6" height="17" rx="3" fill="#fff"/></svg></div>
        <div class="dock-item"><svg viewBox="0 0 50 50"><defs><linearGradient id="gNum" x1="0" y1="0" x2="0" y2="1"><stop offset="0" stop-color="#76e45a"/><stop offset="1" stop-color="#37b92e"/></linearGradient></defs><rect width="50" height="50" rx="11" fill="url(#gNum)"/><rect x="9" y="31" width="6" height="12" fill="#eef5ea"/><rect x="18" y="22" width="6" height="21" fill="#eef5ea"/><rect x="27" y="8" width="6" height="35" fill="#eef5ea"/><rect x="36" y="16" width="6" height="27" fill="#eef5ea"/></svg></div>
        <div class="dock-item"><svg viewBox="0 0 50 50"><defs><linearGradient id="gPages" x1="0" y1="0" x2="0" y2="1"><stop offset="0" stop-color="#fcae35"/><stop offset="1" stop-color="#f28a1f"/></linearGradient></defs><rect width="50" height="50" rx="11" fill="url(#gPages)"/><path d="M39 9c2-1 3 0 2 2L16 39l-4 2 1-5z" fill="#fdf3e3"/><path d="M10 43h30" stroke="#fde3bd" stroke-width="1.500"/></svg></div>
        <div class="dock-item"><svg viewBox="0 0 50 50"><defs><linearGradient id="gStore" x1="0" y1="0" x2="0" y2="1"><stop offset="0" stop-color="#35a2ee"/><stop offset="1" stop-color="#1c5fe0"/></linearGradient></defs><rect width="50" height="50" rx="11" fill="url(#gStore)"/><path d="M31 8L15 38M20 8l16 30M9 31h32" stroke="#fff" stroke-width="4" stroke-linecap="round"/></svg></div>
        <div class="dock-item"><svg viewBox="0 0 50 50"><defs><linearGradient id="gSet" x1="0" y1="0" x2="0" y2="1"><stop offset="0" stop-color="#dfe2e5"/><stop offset="1" stop-color="#8e9297"/></linearGradient></defs><rect width="50" height="50" rx="11" fill="url(#gSet)"/><circle cx="25" cy="25" r="20" fill="#555"/><circle cx="25" cy="25" r="16" fill="none" stroke="#888" stroke-width="3" stroke-dasharray="2 2"/><circle cx="25" cy="25" r="12" fill="#6b6b6b"/><path d="M25 25V13M25 25l10 7M25 25l-10 7" stroke="#bbb" stroke-width="2.500"/></svg></div>
        <div class="dock-item run-dot"><svg viewBox="0 0 50 50"><ellipse cx="25" cy="25" rx="25" ry="26" fill="#46ca62"/><path d="M10 18c10-3 21-2 30 3M12 26c9-2 18-1 25 3M14 33c7-2 15-1 21 2" fill="none" stroke="#1a1a1a" stroke-width="4" stroke-linecap="round"/></svg></div>
        <i class="dock-sep sep-one"></i>
        <div class="dock-item"><svg viewBox="0 0 50 50"><defs><linearGradient id="gPc" x1="0" y1="0" x2="1" y2="1"><stop offset="0" stop-color="#21d789"/><stop offset=".5" stop-color="#fcf84a"/></linearGradient></defs><rect width="50" height="50" fill="url(#gPc)"/><rect x="5" y="5" width="40" height="40" fill="#111"/><text x="9" y="24" class="dock-pc">PC</text><rect x="9" y="36" width="14" height="3" fill="#eee"/></svg></div>
        <div class="dock-item run-dot"><svg viewBox="0 0 50 50"><defs><linearGradient id="gWa" x1="0" y1="0" x2="0" y2="1"><stop offset="0" stop-color="#62df60"/><stop offset="1" stop-color="#2ab52c"/></linearGradient></defs><rect width="50" height="50" rx="11" fill="url(#gWa)"/><path d="M25 8a17 17 0 0 0-14.500 25.800L8 42l8.500-2.300A17 17 0 1 0 25 8z" fill="none" stroke="#fff" stroke-width="3"/><path d="M18 16l3.500-.5 2.500 5-2 2.500c1 2.500 3 4.500 5.500 5.500l2.500-2 5 2.500-.5 3.500c-1 1.500-3 2-4.500 1.500-7-1.500-12-6.500-13.500-13-.3-2 .5-3.500 1.500-4.500z" fill="#fff"/></svg></div>
        <div class="dock-item run-dot"><svg viewBox="0 0 50 50"><rect x="1" y="1" width="48" height="48" rx="10" fill="#141618" stroke="#a5adb3" stroke-width="2"/><text x="7" y="20" class="dock-term">$</text><rect x="17" y="8" width="5" height="14" fill="#3a6b3a"/></svg></div>
        <i class="dock-sep sep-two"></i>
        <div class="dock-item dock-trash"><svg viewBox="0 0 50 56"><defs><linearGradient id="gTrash" x1="0" y1="0" x2="1" y2="0"><stop offset="0" stop-color="#777"/><stop offset=".5" stop-color="#555"/><stop offset="1" stop-color="#6a6a6a"/></linearGradient></defs><path d="M4 3c10-4 32-4 42 0l-4 47c-1 7-33 7-34 0z" fill="url(#gTrash)"/><ellipse cx="25" cy="4" rx="21" ry="3.500" fill="#444"/></svg></div>
    </div>
</div>
</body>
</html>
```

FILE: styles.css
```css
* {
    box-sizing: border-box;
    margin: 0;
    padding: 0;
}

html, body {
    width: 2560px;
    height: 1440px;
    overflow: hidden;
}

body {
    display: flex;
    flex-direction: column;
    background: #07130e;
    font-family: Inter, "Liberation Sans", sans-serif;
    color: #14141f;
}

.defs {
    position: absolute;
}

/* mac menu bar */
.menubar {
    height: 24px;
    flex: none;
    display: flex;
    align-items: center;
    justify-content: space-between;
    padding: 0 19px 0 20px;
    background: linear-gradient(90deg, #07150f 0%, #07201a 30%, #0a3a24 70%, #0c3d26 100%);
    font-size: 13px;
    font-weight: 500;
    color: #6f7a75;
}

.menu-left {
    display: flex;
    align-items: center;
    gap: 19.400px;
}

.menu-left b {
    font-weight: 700;
    margin-right: 1px;
}

.menu-right {
    display: flex;
    align-items: center;
    gap: 0;
    color: #6f8a7c;
}

.input-a {
    width: 22px;
    height: 16px;
    background: #4c7a64;
    border-radius: 2px;
    font-style: normal;
    font-size: 12px;
    text-align: center;
    line-height: 16px;
    color: #10281d;
    margin-right: 23px;
}

.pct {
    font-size: 12px;
    margin-right: 5px;
}

.mi-wifi { margin-left: 19px; }
.mi-search { margin-left: 18px; }
.mi-ctrl { margin-left: 19px; }
.mi-siri { margin-left: 16px; }

.clock {
    margin-left: 12px;
    font-size: 14px;
}

/* chrome window */
.window {
    flex: none;
    height: 1333px;
    display: flex;
    flex-direction: column;
    background: #fff;
    border-radius: 10px 10px 0 0;
    overflow: hidden;
}

.tabstrip {
    height: 43px;
    flex: none;
    display: flex;
    align-items: flex-end;
    background: #000;
    color: #c4c4c4;
    font-size: 12.200px;
    border-top: 1px solid #333;
    position: relative;
}

.lights {
    width: 92px;
    height: 33px;
    display: flex;
    gap: 8px;
    padding: 6px 0 0 21px;
}

.lights i {
    width: 12px;
    height: 12px;
    border-radius: 50%;
    background: #2e2e2e;
}

.tab {
    height: 34px;
    display: flex;
    align-items: center;
}

.tab-active {
    width: 241px;
    padding: 0 10px 0 15px;
    background: #333;
    border-radius: 9px 9px 0 0;
    color: #eee;
}

.tab-second {
    width: 239px;
    padding: 0 10px 0 12px;
    border-right: 1px solid #444;
    height: 20px;
    margin-bottom: 7px;
}

.tab-third {
    width: 239px;
    padding: 0 10px 0 12px;
    border-right: 1px solid #444;
    height: 20px;
    margin-bottom: 7px;
}

.favicon {
    flex: none;
    margin-right: 8px;
}

.tab-title {
    flex: 1;
    white-space: nowrap;
    overflow: hidden;
}

.tab-x {
    font-size: 11px;
    color: #ccc;
}

.tab-plus {
    margin: 0 0 10px 15px;
}

.tab-more {
    margin: 0 16px 13px auto;
}

.toolbar {
    height: 36px;
    flex: none;
    display: flex;
    align-items: flex-start;
    padding-top: 4px;
    background: #333;
}

.nav-icons {
    width: 108px;
    height: 28px;
    display: flex;
    align-items: center;
    gap: 16px;
    padding-left: 14px;
}

.omnibox {
    width: 2312px;
    height: 28px;
    display: flex;
    align-items: center;
    gap: 9px;
    padding: 0 11px;
    background: #202124;
    border-radius: 14px;
}

.url {
    font-size: 14px;
    color: #9a9a9a;
}

.url b {
    font-weight: 500;
    color: #eee;
}

.omni-right {
    margin-left: auto;
    display: flex;
    align-items: center;
    gap: 17px;
}

.tool-right {
    flex: 1;
    height: 28px;
    display: flex;
    align-items: center;
    gap: 16px;
    padding-left: 14px;
}

.avatar {
    width: 22px;
    height: 22px;
    border-radius: 50%;
    background: #e8661b;
    color: #f3d9c7;
    font-size: 11px;
    text-align: center;
    line-height: 22px;
}

.bookmarks {
    height: 33px;
    flex: none;
    display: flex;
    align-items: flex-start;
    gap: 8px;
    padding: 6px 0 0 14px;
    background: #333;
    border-bottom: 1px solid #5a5a5a;
    font-size: 12px;
    color: #8f8f8f;
}

/* jenkins header */
.jk-header {
    height: 56px;
    flex: none;
    display: flex;
    align-items: center;
    justify-content: space-between;
    padding: 0 20px 0 18px;
    background: #000;
    color: #fff;
}

.jk-logo {
    display: flex;
    align-items: center;
    gap: 12px;
}

.jk-logo span {
    padding-bottom: 3px;
    font-family: "Liberation Serif", serif;
    font-weight: 700;
    font-size: 33px;
    letter-spacing: 1px;
}

.jk-tools {
    display: flex;
    align-items: center;
    font-size: 16px;
    font-weight: 600;
}

.searchbox {
    width: 300px;
    height: 40px;
    display: flex;
    align-items: center;
    gap: 11px;
    padding: 0 11px 0 12px;
    background: #fff;
    border-radius: 6px;
    margin-right: 22px;
}

.search-hint {
    flex: 1;
    font-size: 15px;
    font-weight: 400;
    color: #707070;
}

.jk-bell, .jk-shield {
    display: flex;
    align-items: center;
    gap: 6px;
}

.jk-shield {
    margin-left: 18px;
}

.count {
    width: 20px;
    height: 20px;
    border-radius: 3px;
    text-align: center;
    line-height: 20px;
    font-size: 15px;
    font-weight: 700;
}

.count-orange { background: #f0962a; }
.count-red { background: #cf3a3f; }

.jk-user {
    display: flex;
    align-items: center;
    gap: 6px;
    margin-left: 18px;
}

.user-caret {
    margin-left: 6px;
}

.jk-logout {
    display: flex;
    align-items: center;
    gap: 5px;
    margin-left: 19px;
}

.crumbs {
    height: 46px;
    flex: none;
    display: flex;
    align-items: center;
    gap: 15px;
    padding: 0 0 0 19px;
    background: #f4f5f7;
    font-size: 13px;
    font-weight: 500;
}

/* page body */
.page {
    flex: 1;
    display: flex;
    overflow: hidden;
    position: relative;
}

.fade {
    position: absolute;
    left: 0;
    right: 0;
    bottom: 0;
    height: 42px;
    background: linear-gradient(rgba(225,225,225,0), #e2e2e2);
}

.side {
    width: 340px;
    flex: none;
    padding-top: 25px;
    position: relative;
}

.side-nav {
    padding-left: 19px;
}

.side-item {
    height: 40px;
    margin-bottom: 4.600px;
    display: flex;
    align-items: center;
    gap: 12px;
    padding-left: 13px;
    border-radius: 10px;
    font-size: 14px;
    font-weight: 500;
    color: #202030;
}

.side-item.current {
    background: #ebecf1;
}

.side-item svg {
    width: 22px;
    height: 22px;
    fill: none;
    stroke: #14141f;
    stroke-width: 1.500;
    stroke-linecap: round;
    stroke-linejoin: round;
}

.history {
    margin-top: 19px;
}

.history-head {
    height: 42px;
    display: flex;
    align-items: center;
    padding: 0 23px 0 20px;
    background: #f2f3f7;
    font-size: 14.200px;
}

.history-head b {
    margin-left: 15px;
    font-weight: 700;
}

.trend {
    margin-left: auto;
    margin-right: 11px;
    font-weight: 600;
    text-decoration: underline;
}

.filter {
    height: 38px;
    margin: 8px;
    display: flex;
    align-items: center;
    gap: 11px;
    padding: 0 8px 0 12px;
    background: #f2f3f7;
    border-radius: 10px;
    font-size: 14px;
    font-weight: 500;
    color: #6e6e90;
}

.filter kbd {
    margin-left: auto;
    width: 22px;
    height: 22px;
    border: 1px solid #dfe0e6;
    border-radius: 4px;
    font-family: Inter, sans-serif;
    font-size: 11px;
    text-align: center;
    line-height: 20px;
}

.build {
    height: 55px;
    padding: 6px 0 0 10px;
    border-top: 1px solid #eee;
}

.build.odd {
    background: #f7f7f8;
}

.build-top {
    display: flex;
    align-items: center;
    gap: 4px;
    height: 16px;
    font-size: 13px;
    font-weight: 600;
}

.build-top a, .build-date a, .history-foot a {
    text-decoration: underline;
}

.build-date {
    display: flex;
    align-items: center;
    height: 16px;
    margin-top: 7px;
    font-size: 12.500px;
    font-weight: 500;
    color: #70707c;
}

.build-date i {
    width: 1px;
    height: 13px;
    background: #888;
    margin: 2px 10px 0 7px;
}

.history-foot {
    height: 39px;
    display: flex;
    align-items: center;
    gap: 5px;
    padding-left: 41px;
    background: #f2f3f7;
    font-size: 12.300px;
    font-weight: 500;
}

.rss-two {
    margin-left: 5px;
}

.main {
    flex: 1;
    padding: 0 32px;
    min-width: 0;
    position: relative;
}

.title-row {
    padding-top: 33px;
}

h1 {
    font-size: 24.500px;
    font-weight: 700;
    line-height: 30px;
}

.actions {
    display: flex;
    flex-direction: column;
    align-items: flex-end;
    margin-top: 33px;
    font-size: 13px;
    font-weight: 500;
}

.add-desc {
    display: flex;
    align-items: center;
    gap: 10px;
    height: 30px;
    padding-right: 14px;
}

.disable-btn {
    width: 120px;
    height: 36px;
    margin-top: 11px;
    border: 0;
    border-radius: 10px;
    background: #f4f5f7;
    font-family: inherit;
    font-size: 13px;
    font-weight: 500;
    color: #14141f;
}

.stage-title {
    margin-top: 27px;
    font-size: 21.500px;
    font-weight: 700;
    line-height: 30px;
}

/* stage view */
.stage {
    display: flex;
    margin-top: 29px;
    width: 500px;
}

.stage-left {
    width: 238px;
    padding-top: 93px;
}

.avg-label {
    height: 52px;
    padding: 7px 14px 0 0;
    text-align: right;
    font-size: 13.700px;
    line-height: 21px;
}

.run {
    height: 83.200px;
    margin-bottom: 2px;
    padding: 20px 0 0 22px;
    display: flex;
    align-items: flex-start;
    position: relative;
    border: 1px solid #f0f0f0;
}

.run.bad {
    background: #fdecea;
    border-color: #fdecea;
}

.run.dim {
    background: #ecdedb;
    border-color: #ecdedb;
}

.run-no {
    position: absolute;
    left: 7px;
    top: 7px;
    padding: 0 7px;
    height: 17px;
    border-radius: 9px;
    background: #c9473d;
    color: #fff;
    font-size: 11.500px;
    line-height: 17px;
}

.run-no.no-ok {
    background: #7a9fcc;
    color: #dfe8f3;
}

.run-date {
    width: 55px;
    height: 47px;
    background: #fff;
    box-shadow: 0 1px 2px rgba(0,0,0,.2);
    font-size: 12px;
    text-align: center;
    line-height: 22px;
    color: #222;
}

.run-commit {
    width: 55px;
    height: 47px;
    padding-top: 5px;
    background: #9c9c9c;
    border-radius: 0 5px 5px 0;
    text-align: center;
    color: #eee;
    font-size: 12px;
    font-weight: 700;
    line-height: 16px;
}

.run-commit small {
    font-size: 12px;
    font-weight: 400;
}

.run.bad .run-commit { background: #9f908e; }
.run.dim .run-commit { background: #968785; }

.run .run-commit.none {
    background: #e2d3d1;
    color: #b0a5a3;
    line-height: 15px;
    padding-top: 5px;
}

.run.dim .run-commit.none {
    background: #d5c7c5;
}

.stage-cols {
    display: grid;
    grid-template-columns: 131px 130px;
    grid-auto-rows: 85.200px;
    grid-template-rows: 93px 52px;
    height: 741px;
    box-shadow: 0 1px 5px rgba(0,0,0,.3);
    background: #fff;
}

.col-head {
    display: flex;
    align-items: center;
    justify-content: center;
    padding-top: 2px;
    text-align: center;
    font-size: 14px;
    font-weight: 700;
    line-height: 21px;
    border-bottom: 2px solid #e2e2e2;
}

.col-head.alt {
    background: #f7f7f7;
}

.col-avg {
    padding-top: 7px;
    background: linear-gradient(#f0f0f0 70%, #dcdcdc);
    text-align: center;
    font-size: 14px;
    line-height: 21px;
    border-left: 1px solid #fff;
}

.col-avg:nth-child(3) {
    background: linear-gradient(#e9e9e9 70%, #d8d8d8);
}

.bar {
    height: 5px;
    margin: 4px 6px 0;
    background: #e4e4e4;
    border: 1px solid #d8d8d8;
}

.bar-fill {
    height: 5px;
    margin-top: -1px;
    background: #5b82cf;
}

.bar-a { width: 75%; }
.bar-b { width: 25%; margin-left: 75%; }

.cell-wrap {
    padding: 1px 3px 2px 3px;
}

.cell-wrap:nth-child(even) {
    padding: 1px 2px 2px 2px;
}

.cell {
    height: 82px;
    padding-top: 24px;
    border-radius: 5px;
    text-align: center;
    line-height: 21px;
    position: relative;
}

.cell.ok {
    background: #e7f7e2;
    border: 1px solid #d8e4d6;
    color: #555;
}

.cell.ok.pale { background: #efffea; }
.cell.ok.dim { background: #dcecd7; }

.cell.fail {
    border: 1.500px solid #d8534e;
    color: #d14e47;
    font-weight: 700;
    background: repeating-linear-gradient(135deg, #fdeae7 0 22px, #fbdcd9 22px 44px);
}

.cell.fail.dim {
    background: repeating-linear-gradient(135deg, #efdfdc 0 22px, #eed5d2 22px 44px);
}

.failed {
    position: absolute;
    right: 1px;
    bottom: 1px;
    font-size: 11.500px;
    line-height: 14px;
    font-weight: 700;
}

.t49 { font-size: 15.500px; }
.t50 { font-size: 16px; }
.t51 { font-size: 16.200px; }
.t52 { font-size: 16.500px; }
.t53 { font-size: 16.800px; }
.t54 { font-size: 17px; }
.t55 { font-size: 17.500px; }

.cell.fail.t50 { font-size: 15px; }
.cell.fail.t52 { font-size: 15.500px; }
.cell.fail.t54 { font-size: 16px; }

.perma-title {
    margin-top: 19px;
    font-size: 22px;
    font-weight: 700;
    line-height: 30px;
}

.perma {
    margin: 30px 0 0 40px;
    font-size: 14.200px;
    font-weight: 500;
    line-height: 21px;
    color: #2155c8;
}

/* dock */
.dock-band {
    flex: 1;
    padding: 3px 0 0 390px;
    background: linear-gradient(90deg, #07130e, #0b2218 50%, #07130e);
}

.dock {
    width: 1781px;
    height: 74px;
    display: flex;
    gap: 15.900px;
    padding: 9px 10px 0 10px;
    background: #12261e;
    border: 1px solid #2a3a33;
    border-radius: 18px;
}

.dock-item {
    width: 50px;
    height: 50px;
    flex: none;
    position: relative;
}

.dock-item svg {
    display: block;
    width: 50px;
    height: 50px;
}

.dock-trash svg {
    height: 56px;
    margin-top: -3px;
}

.run-dot::after {
    content: "";
    position: absolute;
    left: 23px;
    top: 60px;
    width: 4px;
    height: 4px;
    border-radius: 50%;
    background: #aab4af;
}

.dock-sep {
    width: 1px;
    height: 58px;
    background: #3c4c45;
}

.sep-one { margin: 0 8px 0 7px; }
.sep-two { margin: 0 6px 0 6px; }

.dock-feb {
    font-size: 10px;
    font-weight: 600;
    fill: #fff;
    text-anchor: middle;
}

.dock-ten {
    font-size: 27px;
    font-weight: 300;
    fill: #222;
    text-anchor: middle;
}

.dock-tv {
    font-size: 20px;
    font-weight: 500;
    fill: #f2f2f2;
    text-anchor: middle;
}

.dock-pc {
    font-size: 19px;
    font-weight: 700;
    fill: #fff;
}

.dock-term {
    font-size: 15px;
    font-weight: 700;
    fill: #3fbf3f;
}
```
